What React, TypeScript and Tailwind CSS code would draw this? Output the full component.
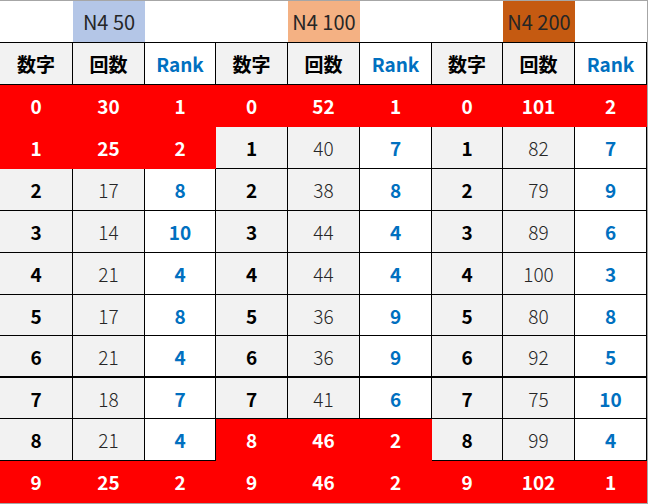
const widths = ["w-[73px]", "w-[72px]", "w-[71px]", "w-[72px]", "w-[72px]", "w-[72px]", "w-[71px]", "w-[72px]", "w-[72px]"];

const groups = [
  {
    label: "N4 50",
    labelBg: "bg-[#b4c6e7]",
    counts: [30, 25, 17, 14, 21, 17, 21, 18, 21, 25],
    ranks: [1, 2, 8, 10, 4, 8, 4, 7, 4, 2],
    red: [0, 1, 9],
  },
  {
    label: "N4 100",
    labelBg: "bg-[#f4b183]",
    counts: [52, 40, 38, 44, 44, 36, 36, 41, 46, 46],
    ranks: [1, 7, 8, 4, 4, 9, 9, 6, 2, 2],
    red: [0, 8, 9],
  },
  {
    label: "N4 200",
    labelBg: "bg-[#c55a11]",
    counts: [101, 82, 79, 89, 100, 80, 92, 75, 99, 102],
    ranks: [2, 7, 9, 6, 3, 8, 5, 10, 4, 1],
    red: [0, 9],
  },
];

// row heights include the bottom border line
const rowHeights = ["h-[42px]", "h-[42px]", "h-[42px]", "h-[42px]", "h-[42px]", "h-[41px]", "h-[42px]", "h-[41px]", "h-[42px]", "h-[42px]"];

function Cell({
  w,
  h,
  className,
  children,
}: {
  w: string;
  h: string;
  className: string;
  children?: React.ReactNode;
}) {
  return (
    <div className={`${w} ${h} shrink-0 flex items-center justify-center border-r border-b ${className}`}>
      {children}
    </div>
  );
}

export default function App() {
  return (
    <div
      className="w-[648px] h-[504px] bg-white border-t border-b border-r border-[#a6a6a6] overflow-hidden text-[19px] leading-none"
      style={{ fontFamily: '"Noto Sans CJK JP", "Noto Sans", sans-serif' }}
    >
      {/* Group titles */}
      <div className="flex h-[42px] border-b border-black">
        {groups.map((g, gi) => (
          <div key={gi} className="flex">
            <div className={`${widths[gi * 3]} h-full`} />
            <div className={`${widths[gi * 3 + 1]} h-full ${g.labelBg} flex items-center justify-center text-[20px] text-[#262626]`}>
              {g.label}
            </div>
            <div className={`${widths[gi * 3 + 2]} h-full`} />
          </div>
        ))}
      </div>

      {/* Column headers */}
      <div className="flex">
        {groups.map((_, gi) => (
          <div key={gi} className="flex">
            <Cell w={widths[gi * 3]} h="h-[42px]" className="border-black bg-[#f2f2f2] font-bold text-black">
              数字
            </Cell>
            <Cell w={widths[gi * 3 + 1]} h="h-[42px]" className="border-black bg-[#f2f2f2] font-bold text-black">
              回数
            </Cell>
            <Cell w={widths[gi * 3 + 2]} h="h-[42px]" className="border-black bg-white font-bold text-[#0070c0]">
              Rank
            </Cell>
          </div>
        ))}
      </div>

      {/* Data rows */}
      {rowHeights.map((h, r) => (
        <div key={r} className="flex">
          {groups.map((g, gi) => {
            const red = g.red.includes(r);
            const thick = r === 6 ? "border-b-2" : "";
            if (red) {
              return (
                <div key={gi} className="flex">
                  {[r, g.counts[r], g.ranks[r]].map((v, ci) => (
                    <Cell key={ci} w={widths[gi * 3 + ci]} h={h} className="border-[#ff0000] bg-[#ff0000] font-bold text-white">
                      {v}
                    </Cell>
                  ))}
                </div>
              );
            }
            return (
              <div key={gi} className="flex">
                <Cell w={widths[gi * 3]} h={h} className={`border-black bg-[#f2f2f2] font-bold text-black ${thick}`}>
                  {r}
                </Cell>
                <Cell w={widths[gi * 3 + 1]} h={h} className={`border-black bg-[#f2f2f2] font-light text-[#262626] ${thick}`}>
                  {g.counts[r]}
                </Cell>
                <Cell w={widths[gi * 3 + 2]} h={h} className={`border-black bg-white font-bold text-[#0070c0] ${thick}`}>
                  {g.ranks[r]}
                </Cell>
              </div>
            );
          })}
        </div>
      ))}
    </div>
  );
}
